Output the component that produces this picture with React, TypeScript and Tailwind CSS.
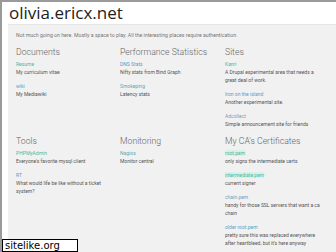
const sections = [
  {
    title: "Documents",
    items: [
      { name: "Resume", color: "text-[#4fb9a0]", desc: "My curriculum vitae" },
      { name: "wiki", color: "text-[#5a9fc4]", desc: "My Mediawiki" },
    ],
  },
  {
    title: "Performance Statistics",
    items: [
      { name: "DNS Stats", color: "text-[#5a9fc4]", desc: "Nifty stats from Bind Graph" },
      { name: "Smokeping", color: "text-[#5aa9b8]", desc: "Latency stats" },
    ],
  },
  {
    title: "Sites",
    items: [
      { name: "Kanri", color: "text-[#4fb9a0]", desc: "A Drupal experimental area that needs a great deal of work." },
      { name: "Iron on the island", color: "text-[#5a9fc4]", desc: "Another experimental site." },
      { name: "Adcollect", color: "text-[#7a9cb8]", desc: "Simple announcement site for friends" },
    ],
  },
  {
    title: "Tools",
    items: [
      { name: "PHPMyAdmin", color: "text-[#4fb9a0]", desc: "Everyone's favorite mysql client" },
      { name: "RT", color: "text-[#5a9fc4]", desc: "What would life be like without a ticket system?" },
    ],
  },
  {
    title: "Monitoring",
    items: [{ name: "Nagios", color: "text-[#5aa9b8]", desc: "Monitor central" }],
  },
  {
    title: "My CA's Certificates",
    items: [
      { name: "root.pem", color: "text-[#4fb9a0]", hl: true, desc: "only signs the intermediate certs" },
      { name: "intermediate.pem", color: "text-[#4fb9a0]", hl: true, desc: "current signer" },
      { name: "chain.pem", color: "text-[#7a9cb8]", desc: "handy for those SSL servers that want a ca chain" },
      { name: "older root.pem", color: "text-[#5a9fc4]", desc: "pretty sure this was replaced everywhere after heartbleed, but it's here anyway" },
    ],
  },
];

type Item = { name: string; color: string; desc: string; hl?: boolean };

function Section({ title, items }: { title: string; items: Item[] }) {
  return (
    <div className="flex flex-col pr-2">
      <h2 className="text-[8.7px] leading-[12px] font-light text-[#666] mb-[2px]">{title}</h2>
      <div className="flex flex-col gap-[6px]">
        {items.map((it) => (
          <div key={it.name} className="flex flex-col">
            <a className={`text-[5px] leading-[8px] ${it.color}`}>
              <span className={it.hl ? "bg-[#d8f1ea]" : ""}>{it.name}</span>
            </a>
            <p className="text-[5px] leading-[8px] text-[#555]">{it.desc}</p>
          </div>
        ))}
      </div>
    </div>
  );
}

export default function App() {
  return (
    <div className="relative w-[336px] h-[252px] overflow-hidden bg-white border-t-2 border-l-2 border-[#9a9a9a] font-['Roboto',sans-serif]">
      <h1 className="pl-[7px] pt-[1px] h-[22px] text-[17px] leading-[20px] text-[#222] font-['Open_Sans',sans-serif]">
        olivia.ericx.net
      </h1>
      <div className="ml-[6px] w-[340px] min-h-[240px] bg-[#f1f1f1] border-t border-[#e6e6e6] px-2 pt-[6px]">
        <p className="text-[5.2px] leading-[8px] text-[#777]">
          Not much going on here. Mostly a space to play. All the interesting places require authentication.
        </p>
        <div className="grid grid-cols-[104px_105px_105px] gap-y-[7px] mt-[7px]">
          {sections.map((s) => (
            <Section key={s.title} title={s.title} items={s.items} />
          ))}
        </div>
      </div>
      <div className="absolute left-0 bottom-0 w-[76px] h-[13px] bg-white border border-black px-[2px] text-[10px] leading-[11px] text-black font-['DejaVu_Sans',sans-serif]">
        sitelike.org
      </div>
    </div>
  );
}
